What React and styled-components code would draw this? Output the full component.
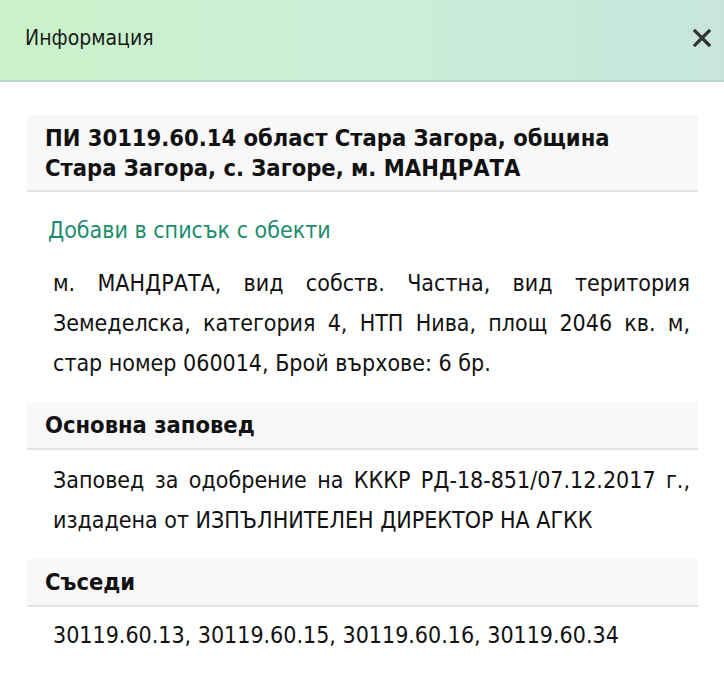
import React from 'react';
import styled, { createGlobalStyle } from 'styled-components';

const GlobalStyle = createGlobalStyle`
	body {
		margin: 0;
		background: #fff;
		font-family: 'DejaVu Sans', sans-serif;
		font-stretch: condensed;
		color: #111;
	}
`;

const Header = styled.div`
	display: flex;
	align-items: center;
	justify-content: space-between;
	height: 82px;
	padding: 0 7px 5px 25px;
	box-sizing: border-box;
	background: linear-gradient(to right, #c9f2c8 0%, #cbeed8 50%, #c7e5dc 100%);
	border-bottom: 2px solid #b8d8c8;
`;

const Title = styled.h1`
	margin: 0;
	font-size: 21px;
	font-weight: normal;
	color: #1a1a1a;
`;

const Close = styled.button`
	display: flex;
	align-items: center;
	justify-content: center;
	width: 30px;
	height: 30px;
	padding: 0;
	border: none;
	background: none;
	cursor: pointer;
`;

const Content = styled.div`
	padding: 33px 26px 0 27px;
`;

const SectionHead = styled.div`
	padding: ${(p) => (p.tall ? '8px 18px 7px' : '8px 18px')};
	background: #f8f8f8;
	font-weight: bold;
	font-size: 23.5px;
	line-height: 30px;
	box-shadow: 0 2px 0 #e2e2e2;
`;

const AddLink = styled.a`
	display: block;
	margin: 25px 0 0 21px;
	font-size: 23px;
	line-height: 30px;
	color: #1c8c6c;
	text-decoration: none;
	cursor: pointer;
`;

const Text = styled.p`
	margin: ${(p) => p.top || 12}px 8px 19px 26px;
	font-size: 23px;
	line-height: 40px;
	text-align: justify;
`;

const App = () => {
	return (
		<React.Fragment>
			<GlobalStyle />
			<Header>
				<Title>Информация</Title>
				<Close aria-label='close'>
					<svg width='18' height='18' viewBox='0 0 18 18'>
						<path d='M2 2 L16 16 M16 2 L2 16' stroke='#333' strokeWidth='3.2' strokeLinecap='square' />
					</svg>
				</Close>
			</Header>
			<Content>
				<SectionHead tall>
					ПИ 30119.60.14 област Стара Загора, община Стара Загора, с. Загоре, м. МАНДРАТА
				</SectionHead>
				<AddLink>Добави в списък с обекти</AddLink>
				<Text top={18}>
					м. МАНДРАТА, вид собств. Частна, вид територия Земеделска, категория 4, НТП Нива, площ 2046 кв. м, стар номер 060014, Брой върхове: 6 бр.
				</Text>
				<SectionHead>Основна заповед</SectionHead>
				<Text>
					Заповед за одобрение на КККР РД-18-851/07.12.2017 г., издадена от ИЗПЪЛНИТЕЛЕН ДИРЕКТОР НА АГКК
				</Text>
				<SectionHead>Съседи</SectionHead>
				<Text top={10}>30119.60.13, 30119.60.15, 30119.60.16, 30119.60.34</Text>
			</Content>
		</React.Fragment>
	);
};

export default App;
